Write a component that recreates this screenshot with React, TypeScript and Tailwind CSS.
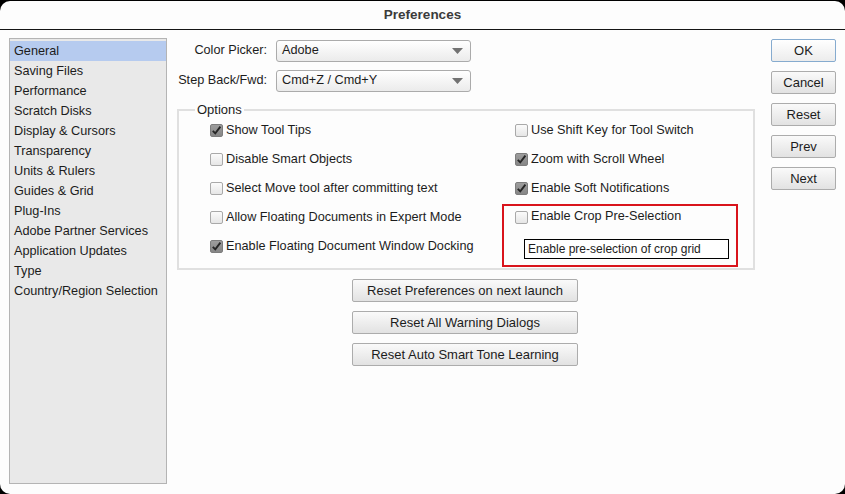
import React from "react";

const sections = [
  "General",
  "Saving Files",
  "Performance",
  "Scratch Disks",
  "Display & Cursors",
  "Transparency",
  "Units & Rulers",
  "Guides & Grid",
  "Plug-Ins",
  "Adobe Partner Services",
  "Application Updates",
  "Type",
  "Country/Region Selection",
];

const leftOptions = [
  { label: "Show Tool Tips", checked: true },
  { label: "Disable Smart Objects", checked: false },
  { label: "Select Move tool after committing text", checked: false },
  { label: "Allow Floating Documents in Expert Mode", checked: false },
  { label: "Enable Floating Document Window Docking", checked: true },
];

const rightOptions = [
  { label: "Use Shift Key for Tool Switch", checked: false },
  { label: "Zoom with Scroll Wheel", checked: true },
  { label: "Enable Soft Notifications", checked: true },
];

function Checkbox({ checked }: { checked: boolean }) {
  if (checked) {
    return (
      <span className="flex h-[13px] w-[13px] shrink-0 items-center justify-center rounded-[2px] border border-[#7d7d7d] bg-gradient-to-b from-[#9d9d9d] to-[#868686]">
        <svg width="11" height="11" viewBox="0 0 11 11">
          <path d="M1.8 5.8 L4.3 8.4 L9.4 1.6" fill="none" stroke="#262626" strokeWidth="1.9" />
        </svg>
      </span>
    );
  }
  return (
    <span className="h-[13px] w-[13px] shrink-0 rounded-[2px] border border-[#a9a9a9] bg-gradient-to-b from-[#fbfbfb] to-[#e6e6e6]" />
  );
}

function Option({ label, checked, className = "h-[29px]" }: { label: string; checked: boolean; className?: string }) {
  return (
    <div className={`flex items-center gap-[3px] ${className}`}>
      <Checkbox checked={checked} />
      <span>{label}</span>
    </div>
  );
}

function Select({ value }: { value: string }) {
  return (
    <div className="flex h-[22px] w-[195px] items-center justify-between rounded-[3px] border border-[#ababab] bg-gradient-to-b from-white to-[#ebebeb] pl-[5px] pr-[7px]">
      <span>{value}</span>
      <svg width="11" height="6" viewBox="0 0 11 6">
        <path d="M0 0 H11 L5.5 6 Z" fill="#727272" />
      </svg>
    </div>
  );
}

function Button({ children, primary, className = "" }: { children: React.ReactNode; primary?: boolean; className?: string }) {
  return (
    <div
      className={`flex h-[23px] items-center justify-center rounded-[2px] border bg-gradient-to-b text-[13px] ${
        primary ? "border-[#86abcf] from-white to-[#ececec]" : "border-[#acacac] from-[#fafafa] to-[#e2e2e2]"
      } ${className}`}
    >
      {children}
    </div>
  );
}

export default function App() {
  return (
    <div className="h-[494px] w-[845px] bg-black pt-px font-['Liberation_Sans',Arial,sans-serif] text-[12.7px] text-[#1c1c1c]">
      <div className="flex h-[493px] flex-col overflow-hidden rounded-[10px] bg-[#fdfdfd]">
        <div className="flex h-[29px] shrink-0 items-center justify-center border-b border-[#151515] text-[13.5px] font-bold text-[#3b3b3b]">
          Preferences
        </div>

        <div className="flex flex-1 pl-[9px] pr-[9px] pt-[8px] pb-[10px]">
          <div className="w-[158px] border border-[#b4b4b4] bg-[#e9e9e9] pt-[2px]">
            {sections.map((s, i) => (
              <div
                key={s}
                className={`flex h-[20px] items-center pl-[4px] pt-px ${i === 0 ? "bg-[#b6cbef]" : ""}`}
              >
                {s}
              </div>
            ))}
          </div>

          <div className="ml-[10px] flex w-[578px] flex-col pt-[2px]">
            <div className="flex items-center">
              <span className="w-[91px] pr-[1px] text-right">Color Picker:</span>
              <div className="ml-[8px]">
                <Select value="Adobe" />
              </div>
            </div>
            <div className="mt-[8px] flex items-center">
              <span className="w-[91px] whitespace-nowrap pr-[1px] text-right">Step Back/Fwd:</span>
              <div className="ml-[8px]">
                <Select value="Cmd+Z / Cmd+Y" />
              </div>
            </div>

            <fieldset className="mt-[10px] h-[168px] border-2 border-[#e0e0e0] px-0 pt-0">
              <legend className="ml-[16px] px-[2px] text-[13px] leading-[15px]">Options</legend>
              <div className="-mt-[1px] flex">
                <div className="ml-[31px] w-[290px]">
                  {leftOptions.map((o) => (
                    <Option key={o.label} {...o} />
                  ))}
                </div>
                <div className="ml-[2px] w-[236px]">
                  <div className="pl-[13px]">
                    {rightOptions.map((o) => (
                      <Option key={o.label} {...o} />
                    ))}
                  </div>
                  <div className="mt-[1px] h-[63px] border-2 border-[#d9141c] pl-[11px] pt-px">
                    <Option label="Enable Crop Pre-Selection" checked={false} className="h-[20px]" />
                    <div className="ml-[9px] mt-[12px] flex h-[20px] w-[205px] items-center border border-black bg-white pl-[3px] text-[12px]">
                      Enable pre-selection of crop grid
                    </div>
                  </div>
                </div>
              </div>
            </fieldset>

            <div className="mt-[9px] flex flex-col gap-[9px] pl-[175px]">
              <Button className="w-[226px]">Reset Preferences on next launch</Button>
              <Button className="w-[226px]">Reset All Warning Dialogs</Button>
              <Button className="w-[226px]">Reset Auto Smart Tone Learning</Button>
            </div>
          </div>

          <div className="ml-[16px] mt-[1px] flex w-[65px] flex-col gap-[9px]">
            <Button primary>OK</Button>
            <Button>Cancel</Button>
            <Button>Reset</Button>
            <Button>Prev</Button>
            <Button>Next</Button>
          </div>
        </div>
      </div>
    </div>
  );
}
